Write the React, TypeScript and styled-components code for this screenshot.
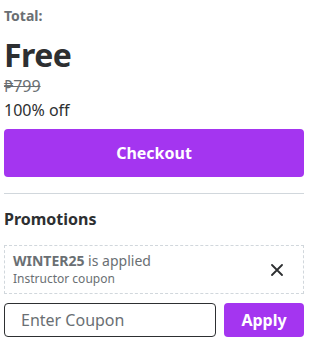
import styled, { createGlobalStyle } from "styled-components"

const GlobalStyle = createGlobalStyle`
	body {
		margin: 0;
		background: #ffffff;
		font-family: "Noto Sans", "Liberation Sans", sans-serif;
		color: #2d2f31;
	}
	* {
		box-sizing: border-box;
	}
`

const Panel = styled.div`
	width: 300px;
	margin-left: 4px;
	display: flex;
	flex-direction: column;
`

const TotalLabel = styled.div`
	font-size: 14px;
	font-weight: 700;
	color: #6a6f73;
	line-height: 20px;
	margin-top: 6px;
`

const Price = styled.div`
	font-size: 32px;
	font-weight: 700;
	line-height: 38px;
	margin-top: 10px;
	letter-spacing: -0.5px;
`

const OldPrice = styled.div`
	font-size: 16px;
	color: #6a6f73;
	text-decoration: line-through;
	line-height: 22px;
	margin-top: 1px;
`

const Discount = styled.div`
	font-size: 16px;
	line-height: 22px;
	margin-top: 2px;
`

const PurpleButton = styled.button<{ $width?: string; $height: number }>`
	width: ${(p) => p.$width || "100%"};
	height: ${(p) => p.$height}px;
	background: #a435f0;
	color: #ffffff;
	border: none;
	border-radius: 4px;
	font-family: inherit;
	font-size: 16px;
	font-weight: 700;
	cursor: pointer;
	flex-shrink: 0;
`

const CheckoutWrap = styled.div`
	margin-top: 8px;
`

const Divider = styled.hr`
	border: none;
	border-top: 1px solid #d1d7dc;
	margin: 16px 0 0 0;
`

const SectionTitle = styled.div`
	font-size: 16px;
	font-weight: 700;
	line-height: 22px;
	margin-top: 14px;
`

const CouponBox = styled.div`
	margin-top: 15px;
	height: 49px;
	border: 1px dashed #d1d7dc;
	display: flex;
	align-items: center;
	justify-content: space-between;
	padding: 0 18px 0 8px;
`

const CouponText = styled.div`
	display: flex;
	flex-direction: column;
	color: #6a6f73;
`

const CouponLine = styled.div`
	font-size: 14px;
	line-height: 18px;

	b {
		font-weight: 700;
	}
`

const CouponSub = styled.div`
	font-size: 12px;
	line-height: 16px;
	margin-top: 1px;
`

const CloseButton = styled.button`
	background: none;
	border: none;
	padding: 0;
	width: 16px;
	height: 16px;
	display: flex;
	align-items: center;
	justify-content: center;
	cursor: pointer;
`

const CouponRow = styled.div`
	display: flex;
	gap: 8px;
	margin-top: 9px;
`

const CouponInput = styled.input`
	flex: 1;
	min-width: 0;
	height: 34px;
	border: 1px solid #2d2f31;
	border-radius: 4px;
	padding: 0 16px;
	font-family: inherit;
	font-size: 16px;
	color: #2d2f31;

	&::placeholder {
		color: #6a6f73;
	}
`

export default function App() {
	return (
		<>
			<GlobalStyle />
			<Panel>
				<TotalLabel>Total:</TotalLabel>
				<Price>Free</Price>
				<OldPrice>₱799</OldPrice>
				<Discount>100% off</Discount>
				<CheckoutWrap>
					<PurpleButton $height={48}>Checkout</PurpleButton>
				</CheckoutWrap>
				<Divider />
				<SectionTitle>Promotions</SectionTitle>
				<CouponBox>
					<CouponText>
						<CouponLine>
							<b>WINTER25</b> is applied
						</CouponLine>
						<CouponSub>Instructor coupon</CouponSub>
					</CouponText>
					<CloseButton aria-label="Remove coupon">
						<svg width="12" height="12" viewBox="0 0 12 12">
							<path d="M1 1L11 11M11 1L1 11" stroke="#2d2f31" strokeWidth="1.8" strokeLinecap="round" />
						</svg>
					</CloseButton>
				</CouponBox>
				<CouponRow>
					<CouponInput placeholder="Enter Coupon" />
					<PurpleButton $width="80px" $height={34}>
						Apply
					</PurpleButton>
				</CouponRow>
			</Panel>
		</>
	)
}
